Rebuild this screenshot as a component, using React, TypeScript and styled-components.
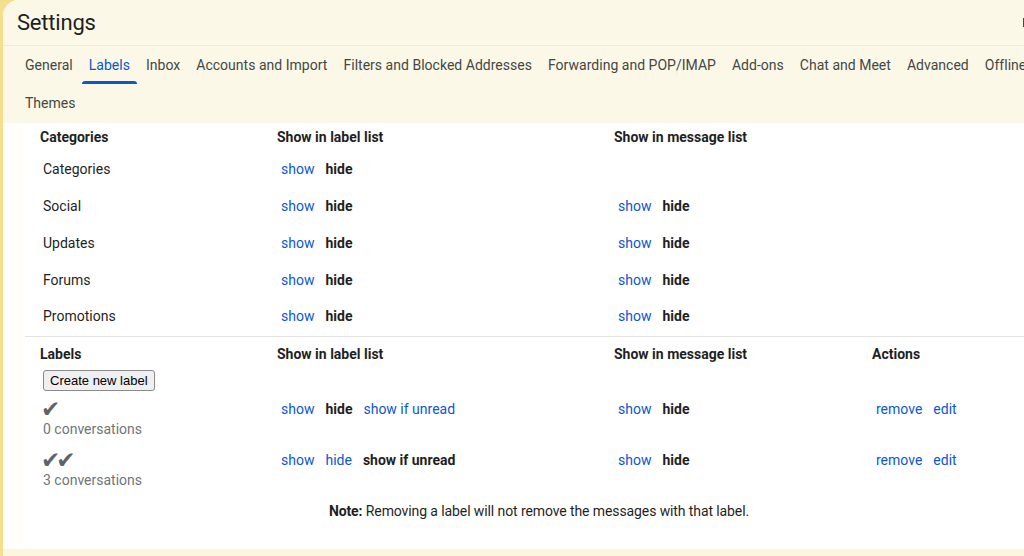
import styled, { createGlobalStyle } from "styled-components";

const GlobalStyle = createGlobalStyle`
  html, body {
    margin: 0;
    padding: 0;
    background: #f6df8c;
    overflow: hidden;
  }
  body {
    font-family: Roboto, "Noto Sans", "Liberation Sans", sans-serif;
    color: #1f1f1f;
  }
`;

const Page = styled.div`
  width: 1024px;
  height: 556px;
  overflow: hidden;
  padding-left: 3px;
  box-sizing: border-box;
`;

const Panel = styled.div`
  //設定パネル (右側は画面外まで続く)
  width: 1072px;
  height: 556px;
  display: flex;
  flex-direction: column;
  border-radius: 16px 0 0 0;
  overflow: hidden;
  background: #fffefa;
`;

const Header = styled.header`
  background: #fcf8e7;
`;

const TitleBar = styled.div`
  height: 46px;
  display: flex;
  align-items: center;
  justify-content: space-between;
  padding: 0 34px 0 14px;
  border-bottom: 1px solid #f0ebd4;
  box-sizing: border-box;
`;

const Title = styled.h1`
  margin: 0;
  font-size: 22px;
  font-weight: 400;
  color: #1f1f1f;
  letter-spacing: -0.2px;
`;

const TabBar = styled.nav`
  display: flex;
  flex-wrap: wrap;
  padding: 0 0 1px 14px;
`;

const Tab = styled.a<{ $active?: boolean }>`
  //タブ
  position: relative;
  height: 38px;
  line-height: 38px;
  padding: 0 8px;
  font-size: 14px;
  letter-spacing: 0.02px;
  color: ${(p) => (p.$active ? "#0b57d0" : "#444746")};
  white-space: nowrap;
  cursor: pointer;
  &::after {
    content: "";
    display: ${(p) => (p.$active ? "block" : "none")};
    position: absolute;
    left: 1px;
    right: 1px;
    bottom: 0;
    height: 3px;
    border-radius: 3px 3px 0 0;
    background: #0b57d0;
  }
`;

const Content = styled.main`
  flex: 1;
  padding: 0 22px;
  display: flex;
  flex-direction: column;
`;

const Sheet = styled.div`
  flex: 1;
  background: #ffffff;
`;

const Section = styled.section<{ $divider?: boolean }>`
  border-top: ${(p) => (p.$divider ? "1px solid #e3e3e3" : "none")};
  margin-top: ${(p) => (p.$divider ? "1px" : "0")};
`;

const Row = styled.div<{ $h?: string; $top?: boolean }>`
  //表の行
  display: grid;
  grid-template-columns: 237px 337px 258px 1fr;
  align-items: ${(p) => (p.$top ? "start" : "center")};
  padding-left: 15px;
  height: ${(p) => p.$h ?? "auto"};
`;

const HeadCell = styled.div`
  font-size: 14px;
  font-weight: 700;
  line-height: 18px;
  color: #1f1f1f;
`;

const NameCell = styled.div`
  padding-left: 3px;
  font-size: 14px;
  color: #1f1f1f;
`;

const LinkGroup = styled.div`
  display: flex;
  gap: 11px;
  padding-left: 4px;
  font-size: 14px;
  line-height: 20px;
`;

const Link = styled.a<{ $on?: boolean }>`
  color: ${(p) => (p.$on ? "#1f1f1f" : "#0b57d0")};
  font-weight: ${(p) => (p.$on ? 700 : 400)};
  cursor: pointer;
  white-space: nowrap;
`;

const LabelsHead = styled(Row)`
  padding-top: 8px;
`;

const ButtonRow = styled.div`
  padding: 7px 0 8px 18px;
`;

const Button = styled.button`
  height: 21px;
  padding: 0 6px;
  font-family: "Liberation Sans", Arial, sans-serif;
  font-size: 13px;
  color: #000;
  background: #efefef;
  border: 1px solid #8a8a8a;
  border-radius: 3px;
`;

const LabelRow = styled(Row)`
  padding-bottom: 11px;
`;

const LabelInfo = styled.div`
  padding-left: 1px;
`;

const Check = styled.div`
  font-family: "DejaVu Sans", sans-serif;
  font-size: 23px;
  line-height: 20px;
  height: 20px;
  color: #5f6368;
  letter-spacing: -4px;
`;

const Count = styled.div`
  padding-left: 2px;
  font-size: 14px;
  line-height: 20px;
  color: #70757a;
`;

const Note = styled.p`
  margin: 0;
  text-align: center;
  font-size: 14px;
  line-height: 20px;
  letter-spacing: -0.1px;
  color: #1f1f1f;
  b {
    font-weight: 700;
  }
`;

const Footer = styled.div`
  height: 7px;
  background: #fcf6df;
`;

const tabs = [
  "General",
  "Labels",
  "Inbox",
  "Accounts and Import",
  "Filters and Blocked Addresses",
  "Forwarding and POP/IMAP",
  "Add-ons",
  "Chat and Meet",
  "Advanced",
  "Offline",
  "Themes",
];

const categories = [
  { name: "Categories", msg: false },
  { name: "Social", msg: true },
  { name: "Updates", msg: true },
  { name: "Forums", msg: true },
  { name: "Promotions", msg: true },
];

const labels = [
  { check: "✔", count: "0 conversations", state: "hide" },
  { check: "✔✔", count: "3 conversations", state: "unread" },
];

function ShowHide() {
  return (
    <LinkGroup>
      <Link>show</Link>
      <Link $on>hide</Link>
    </LinkGroup>
  );
}

export default function App() {
  return (
    <>
      <GlobalStyle />
      <Page>
        <Panel>
          <Header>
            <TitleBar>
              <Title>Settings</Title>
              <svg width="18" height="12" viewBox="0 0 18 12">
                <rect x="0" y="1" width="2.5" height="9" fill="#444746" />
                <rect x="2" y="1" width="16" height="9" fill="none" stroke="#444746" />
              </svg>
            </TitleBar>
            <TabBar>
              {tabs.map((t) => (
                <Tab key={t} $active={t === "Labels"}>
                  {t}
                </Tab>
              ))}
            </TabBar>
          </Header>
          <Content>
            <Sheet>
              <Section>
                <Row $h="28px">
                  <HeadCell>Categories</HeadCell>
                  <HeadCell>Show in label list</HeadCell>
                  <HeadCell>Show in message list</HeadCell>
                  <div />
                </Row>
                {categories.map((c) => (
                  <Row key={c.name} $h="36.75px">
                    <NameCell>{c.name}</NameCell>
                    <ShowHide />
                    {c.msg ? <ShowHide /> : <div />}
                    <div />
                  </Row>
                ))}
              </Section>
              <Section $divider>
                <LabelsHead>
                  <HeadCell>Labels</HeadCell>
                  <HeadCell>Show in label list</HeadCell>
                  <HeadCell>Show in message list</HeadCell>
                  <HeadCell>Actions</HeadCell>
                </LabelsHead>
                <ButtonRow>
                  <Button>Create new label</Button>
                </ButtonRow>
                {labels.map((l) => (
                  <LabelRow key={l.count} $top>
                    <LabelInfo>
                      <Check>{l.check}</Check>
                      <Count>{l.count}</Count>
                    </LabelInfo>
                    <LinkGroup>
                      <Link>show</Link>
                      <Link $on={l.state === "hide"}>hide</Link>
                      <Link $on={l.state === "unread"}>show if unread</Link>
                    </LinkGroup>
                    <ShowHide />
                    <LinkGroup>
                      <Link>remove</Link>
                      <Link>edit</Link>
                    </LinkGroup>
                  </LabelRow>
                ))}
                <Note>
                  <b>Note:</b> Removing a label will not remove the messages with that label.
                </Note>
              </Section>
            </Sheet>
          </Content>
          <Footer />
        </Panel>
      </Page>
    </>
  );
}
